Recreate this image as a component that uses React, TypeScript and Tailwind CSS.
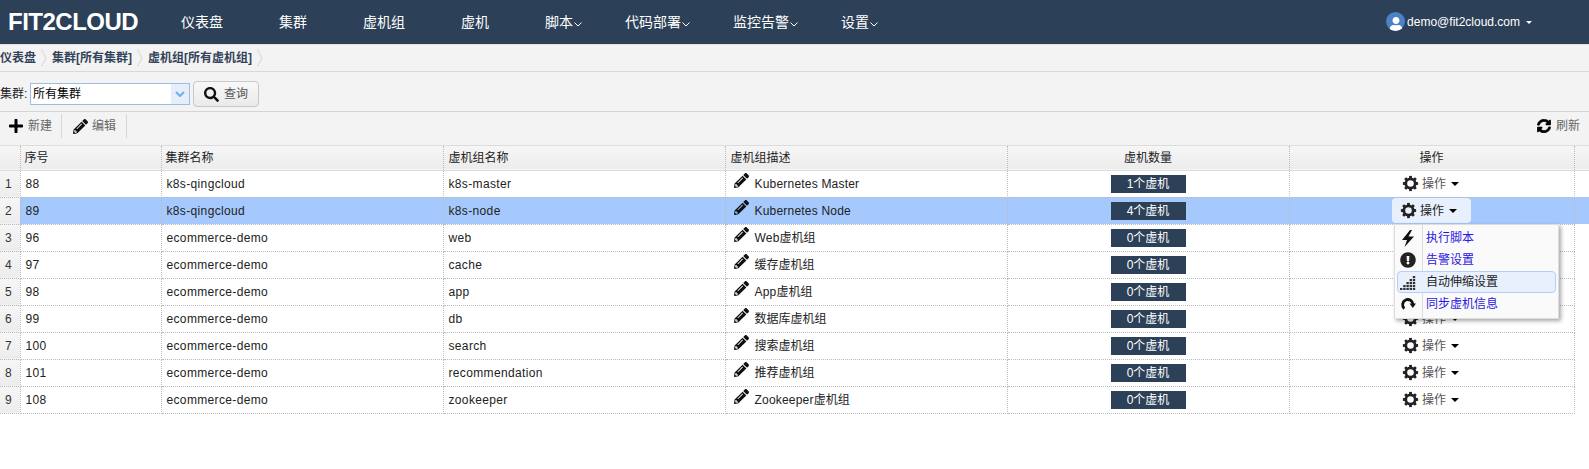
import { FaExclamationCircle, FaPencilAlt, FaPlus, FaSearch, FaSyncAlt, FaUser } from "react-icons/fa";

const font = "font-['Liberation_Sans','Noto_Sans_CJK_SC',sans-serif]";

const navItems = [
  { label: "仪表盘", gap: "mr-[56px]" },
  { label: "集群", gap: "mr-[56px]" },
  { label: "虚机组", gap: "mr-[56px]" },
  { label: "虚机", gap: "mr-[56px]" },
  { label: "脚本", gap: "mr-[43px]", caret: true },
  { label: "代码部署", gap: "mr-[43px]", caret: true },
  { label: "监控告警", gap: "mr-[43px]", caret: true },
  { label: "设置", gap: "", caret: true },
];

const rows = [
  { n: 88, cluster: "k8s-qingcloud", group: "k8s-master", desc: "Kubernetes Master", suffix: "", count: 1 },
  { n: 89, cluster: "k8s-qingcloud", group: "k8s-node", desc: "Kubernetes Node", suffix: "", count: 4 },
  { n: 96, cluster: "ecommerce-demo", group: "web", desc: "Web", suffix: "虚机组", count: 0 },
  { n: 97, cluster: "ecommerce-demo", group: "cache", desc: "", suffix: "缓存虚机组", count: 0 },
  { n: 98, cluster: "ecommerce-demo", group: "app", desc: "App", suffix: "虚机组", count: 0 },
  { n: 99, cluster: "ecommerce-demo", group: "db", desc: "", suffix: "数据库虚机组", count: 0 },
  { n: 100, cluster: "ecommerce-demo", group: "search", desc: "", suffix: "搜索虚机组", count: 0 },
  { n: 101, cluster: "ecommerce-demo", group: "recommendation", desc: "", suffix: "推荐虚机组", count: 0 },
  { n: 108, cluster: "ecommerce-demo", group: "zookeeper", desc: "Zookeeper", suffix: "虚机组", count: 0 },
];

function Chevron() {
  return (
    <svg width="8" height="5" viewBox="0 0 8 5" fill="none" className="ml-px mt-[5px]" aria-hidden>
      <path d="M0.5 0.5L4 4L7.5 0.5" stroke="currentColor" strokeWidth="1" />
    </svg>
  );
}

function Crumb({ label }: { label: string }) {
  return (
    <>
      <span>{label}</span>
      <svg width="6" height="18" viewBox="0 0 6 18" fill="none" className="mx-[5px] shrink-0" aria-hidden>
        <path d="M0.5 0.5L5 9L0.5 17.5" stroke="#d4d4d4" />
      </svg>
    </>
  );
}

function GearIcon() {
  return (
    <svg width="17" height="17" viewBox="0 0 17 17" className="mr-[3px] shrink-0" aria-hidden>
      {[0, 45, 90, 135].map((a) => (
        <rect key={a} x="7.1" y="0.9" width="2.8" height="15.2" fill="#222" transform={`rotate(${a} 8.5 8.5)`} />
      ))}
      <circle cx="8.5" cy="8.5" r="6.1" fill="#222" />
      <circle cx="8.5" cy="8.5" r="3.3" fill="var(--gear-bg)" />
    </svg>
  );
}

function BoltIcon() {
  return (
    <svg width="14" height="17" viewBox="0 0 14 17" aria-hidden>
      <path d="M9 0L1 10H6L3.5 17L13 6.5H7.5L11 0Z" fill="#111" />
    </svg>
  );
}

function RedoIcon() {
  return (
    <svg width="16" height="16" viewBox="0 0 16 16" aria-hidden>
      <path d="M4.3 12.6A5.2 5.2 0 1 1 13 8.5" fill="none" stroke="#111" strokeWidth="2.8" />
      <path d="M9.5 7.5H16L12.8 12Z" fill="#111" />
    </svg>
  );
}

function SignalIcon() {
  const dots: [number, number][] = [];
  for (let col = 0; col < 5; col++) {
    for (let row = 0; row <= col; row++) {
      dots.push([col * 3.2, 14 - row * 3]);
    }
  }
  return (
    <svg width="16" height="16" viewBox="0 0 16 16" aria-hidden>
      {dots.map(([x, y]) => (
        <rect key={`${x}-${y}`} x={x} y={y} width="2.4" height="2.2" fill="#333" />
      ))}
    </svg>
  );
}

function ActionMenu() {
  return (
    <div className="absolute left-[1394px] top-[224px] z-10 w-[165px] border border-[#ddd] bg-[#fafafa] pb-px shadow-[2px_2px_4px_rgba(0,0,0,0.35)]">
      <div className="absolute bottom-0 left-[27px] top-0 w-px bg-[#ddd]" />
      <div className="relative flex flex-col p-[2px]">
        <div className="flex h-[22px] items-center text-[#2a17e0]">
          <span className="mr-[8px] flex w-[21px] justify-center"><BoltIcon /></span>
          <span>执行脚本</span>
        </div>
        <div className="flex h-[22px] items-center text-[#2a17e0]">
          <span className="mr-[8px] flex w-[21px] justify-center text-[#222]"><FaExclamationCircle size={16} /></span>
          <span>告警设置</span>
        </div>
        <div className="flex h-[22px] items-center rounded-[4px] border border-[#b3d0fb] bg-[#e8f0fd] text-[#222]">
          <span className="mr-[8px] flex w-[20px] justify-center"><SignalIcon /></span>
          <span>自动伸缩设置</span>
        </div>
        <div className="flex h-[22px] items-center text-[#2a17e0]">
          <span className="mr-[8px] flex w-[21px] justify-center"><RedoIcon /></span>
          <span>同步虚机信息</span>
        </div>
      </div>
    </div>
  );
}

export default function App() {
  return (
    <div className={`relative h-[469px] w-[1589px] overflow-hidden bg-white text-[12px] text-[#222] ${font}`}>
      <header className="flex h-[44px] items-center bg-[#2c4058] text-white">
        <div className="ml-[8px] w-[173px] text-[24px] font-bold leading-none tracking-[-0.5px]">FIT2CLOUD</div>
        <nav className="flex text-[14px]">
          {navItems.map((item) => (
            <div key={item.label} className={`flex items-center ${item.gap}`}>
              <span>{item.label}</span>
              {item.caret && <Chevron />}
            </div>
          ))}
        </nav>
        <div className="ml-auto mr-[57px] flex items-center pb-px">
          <span className="mr-[2px] flex h-[19px] w-[19px] items-end justify-center overflow-hidden rounded-full bg-[#4a82c3] text-white">
            <FaUser size={14} />
          </span>
          <span>demo@fit2cloud.com</span>
          <span className="ml-[6px] mt-px h-0 w-0 border-x-[3px] border-t-[3px] border-x-transparent border-t-white" />
        </div>
      </header>

      <div className="flex h-[28px] items-center border-b border-t border-[#d9d9d9] border-t-[#e4e4dc] bg-[#f3f3f3] font-bold text-[#33445a]">
        <Crumb label="仪表盘" />
        <Crumb label="集群[所有集群]" />
        <Crumb label="虚机组[所有虚机组]" />
      </div>

      <div className="flex h-[40px] items-center border-b border-[#d4d4d4] bg-[#f3f3f3] pt-[5px]">
        <span className="w-[30px]">集群:</span>
        <div className="flex h-[22px] w-[160px] items-center border border-[#9dbce6] bg-white pl-[2px] text-black">
          <span className="flex-1">所有集群</span>
          <span className="flex h-full w-[18px] items-center justify-center bg-[#e6eef9] text-[#6fb0ec]">
            <svg width="10" height="6" viewBox="0 0 10 6" fill="none" aria-hidden>
              <path d="M1 1L5 5L9 1" stroke="currentColor" strokeWidth="2" />
            </svg>
          </span>
        </div>
        <button className="ml-[3px] flex h-[26px] w-[66px] items-center justify-center gap-[5px] rounded-[4px] border border-[#c8c8c8] bg-gradient-to-b from-[#f8f8f8] to-[#eaeaea] text-[#555]">
          <FaSearch size={15} className="text-[#111]" />
          查询
        </button>
      </div>

      <div className="flex h-[34px] items-center border-b border-[#dcdcdc] bg-[#f3f3f3] pb-[5px] text-[#666]">
        <div className="flex h-[24px] items-center border-r border-[#d6d6d6] pl-[8px] pr-[9px]">
          <FaPlus size={16} className="mr-[4px] text-black" />
          新建
        </div>
        <div className="flex h-[24px] items-center border-r border-[#d6d6d6] pl-[11px] pr-[10px]">
          <FaPencilAlt size={15} className="mr-[4px] text-[#111]" />
          编辑
        </div>
        <div className="ml-auto mr-[9px] flex items-center">
          <FaSyncAlt size={14} stroke="currentColor" strokeWidth={24} className="mr-[5px] text-black" />
          刷新
        </div>
      </div>

      <table className="w-[1589px] table-fixed border-collapse">
        <colgroup>
          <col className="w-[20px]" />
          <col className="w-[141px]" />
          <col className="w-[282px]" />
          <col className="w-[282px]" />
          <col className="w-[282px]" />
          <col className="w-[282px]" />
          <col className="w-[285px]" />
          <col className="w-[15px]" />
        </colgroup>
        <thead>
          <tr className="h-[24px] border-b border-[#dcdcdc] bg-gradient-to-b from-[#f6f6f6] to-[#ececec] text-[#222]">
            <th className="border-r border-dotted border-[#bbb] font-normal" />
            <th className="border-r border-dotted border-[#bbb] pl-[4px] text-left font-normal">序号</th>
            <th className="border-r border-dotted border-[#bbb] pl-[4px] text-left font-normal">集群名称</th>
            <th className="border-r border-dotted border-[#bbb] pl-[5px] text-left font-normal">虚机组名称</th>
            <th className="border-r border-dotted border-[#bbb] pl-[5px] text-left font-normal">虚机组描述</th>
            <th className="border-r border-dotted border-[#bbb] text-center font-normal">虚机数量</th>
            <th className="border-r border-dotted border-[#bbb] text-center font-normal">操作</th>
            <th className="font-normal" />
          </tr>
        </thead>
        <tbody>
          {rows.map((row, i) => {
            const selected = i === 1;
            const cell = "border-b border-r border-dotted border-[#bbb] pl-[5px] text-left tracking-[0.35px]";
            return (
              <tr key={row.n} className={`h-[27px] ${selected ? "bg-[#a5c9fd]" : "bg-white"}`}>
                <td className="border-b border-r border-dotted border-[#bbb] bg-gradient-to-b from-[#f6f6f6] to-[#ececec] pl-[5px] text-left text-[#333]">{i + 1}</td>
                <td className={cell}>{row.n}</td>
                <td className={cell}>{row.cluster}</td>
                <td className={cell}>{row.group}</td>
                <td className="border-b border-r border-dotted border-[#bbb] text-left">
                  <span className="flex items-center pl-[8px]">
                    <FaPencilAlt size={15} className="mr-[6px] -mt-[6px] text-[#111]" />
                    <span className="tracking-[0.2px]">{row.desc}</span>
                    {row.suffix}
                  </span>
                </td>
                <td className="border-b border-r border-dotted border-[#bbb] text-center">
                  <span className="mx-auto flex h-[18px] w-[75px] items-center justify-center bg-[#2c4058] text-white">
                    {row.count}个虚机
                  </span>
                </td>
                <td className="border-b border-r border-dotted border-[#bbb]">
                  <span className={`mx-auto flex h-[25px] w-[79px] items-center rounded-[4px] ${selected ? "bg-[#e8f0fd] pl-[8px] text-[#222] [--gear-bg:#e8f0fd]" : "pl-[10px] text-[#555] [--gear-bg:#fff]"}`}>
                    <GearIcon />
                    操作
                    <span className="ml-[5px] h-0 w-0 border-x-[4px] border-t-[4px] border-x-transparent border-t-black" />
                  </span>
                </td>
                <td />
              </tr>
            );
          })}
        </tbody>
      </table>

      <ActionMenu />
    </div>
  );
}
